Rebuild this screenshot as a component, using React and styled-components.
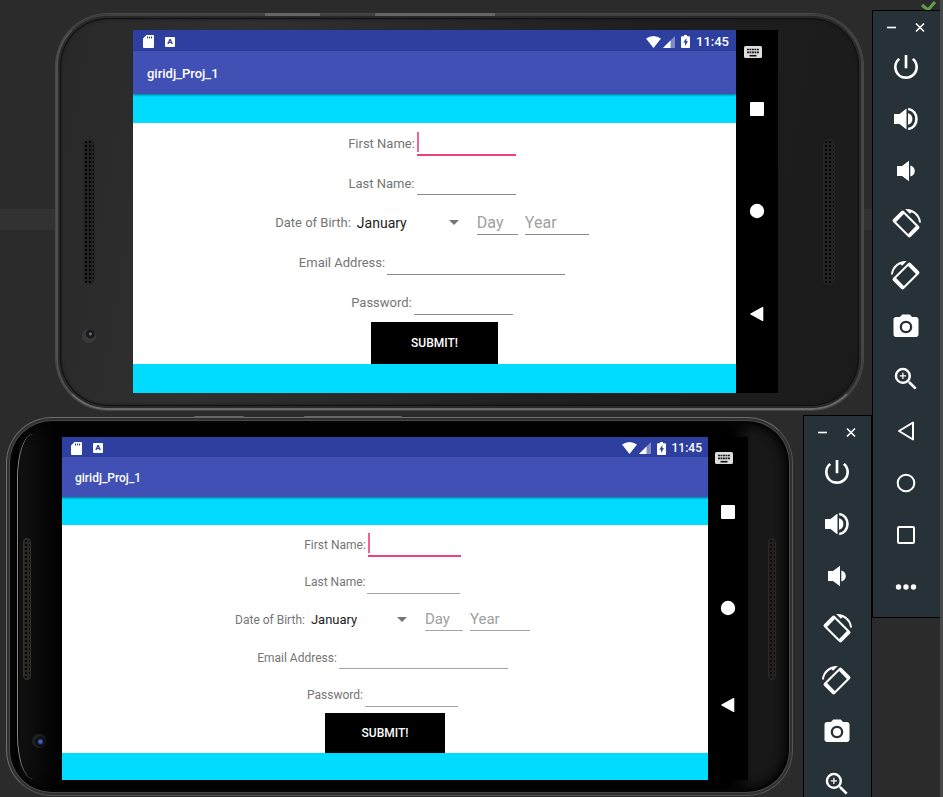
import React, { useId } from "react";
import styled, { createGlobalStyle, css, ThemeProvider } from "styled-components";
import { MdPowerSettingsNew, MdPhotoCamera, MdZoomIn } from "react-icons/md";

const GlobalStyle = createGlobalStyle`
  *, *::before, *::after { box-sizing: border-box; }
  body { margin: 0; background: #2b2b2b; font-family: Roboto, sans-serif; }
  button, input, select { font: inherit; margin: 0; padding: 0; border: 0; border-radius: 0; background: none; color: inherit; }
  button { cursor: pointer; }
`;

const nexus = {
  font: 13, fieldFont: 16, selectFont: 14, statusFont: 13,
  status: 21, appBar: 43, band: 29, lastBand: 29, submit: 42, submitWidth: 127,
  nav: 42, navEdge: 28, inset: 14, statusInset: 10, statusPad: 7,
  name: 99, spinner: 124, day: 41, year: 64, email: 178, form: 241,
  leftBezel: 77, rightBezel: 85, top: 16, bottom: 17,
  leftSpeaker: 27, rightSpeaker: 45, speakerWidth: 12, speakerHeight: 146,
  cameraLeft: 26, cameraTop: 44, line: "#8a8a8a",
};

const pixel = {
  font: 12, fieldFont: 15, selectFont: 13, statusFont: 12,
  status: 20, appBar: 40, band: 28, lastBand: 27, submit: 40, submitWidth: 120,
  nav: 40, navEdge: 27, inset: 13, statusInset: 9, statusPad: 6,
  name: 93, spinner: 118, day: 38, year: 60, email: 169, form: 228,
  leftBezel: 56, rightBezel: 45, top: 20, bottom: 16,
  leftSpeaker: 17, rightSpeaker: 20, speakerWidth: 8, speakerHeight: 142,
  cameraLeft: 26, cameraTop: 54, line: "#a4a4a4",
};

const Desktop = styled.main`
  position: relative;
  height: 100vh;
  overflow: hidden;
  background: linear-gradient(#2b2b2b 209px, #323232 209px 230px, #2b2b2b 230px);
  border-right: 3px solid #47484a;
`;

const CheckMark = styled.svg`
  position: absolute;
  top: 0;
  right: 3px;
  width: 16px;
  height: 12px;
`;

const WindowSlot = styled.div`
  position: absolute;
  top: ${(p) => p.$top}px;
  left: ${(p) => (p.$left === undefined ? "auto" : `${p.$left}px`)};
  right: ${(p) => p.$right}px;
`;

const nexusBody = css`
  border: 2px solid #545454;
  border-color: #3f3f3f #444 #6a6a6a #505050;
  border-radius: 52px;
  background: linear-gradient(100deg, #282828, #303031 22%, #1e1e1e 70%, #1b1b1b);
  box-shadow: 0 0 0 1px #484848, inset 0 0 0 2px #292929, inset 0 0 0 3px #101010, inset 0 0 3px 3px #161616;
`;

const pixelBody = css`
  border: 1px solid #777;
  border-color: #6d6d6d #555 #555 #707070;
  border-radius: 46px;
  background: linear-gradient(90deg, #000 12px, #121212 12px, #020202 48px, #020202 calc(100% - 60px), #171717 calc(100% - 40px), #171717);
  box-shadow: inset 0 0 0 2px #303030, inset 0 0 0 3px #484848, inset 0 0 0 5px #050505, inset 0 0 8px 8px #050505;
`;

const Phone = styled.section`
  position: relative;
  display: grid;
  grid-template-columns: ${({ theme }) => theme.leftBezel - theme.frame}px 1fr ${({ theme }) => theme.rightBezel - theme.frame}px;
  padding: ${({ theme }) => theme.top - theme.frame}px 0 ${({ theme }) => theme.bottom - theme.frame}px;
  ${({ theme }) => (theme.kind === "nexus" ? nexusBody : pixelBody)}
`;

const SideKey = styled.span`
  position: absolute;
  bottom: 100%;
  left: ${(p) => p.$left}px;
  width: ${(p) => p.$width}px;
  height: ${(p) => p.$height}px;
  background: #666;
  border-radius: 1px 1px 0 0;
`;

const GlassEdge = styled.span`
  position: absolute;
  top: 16px;
  bottom: 16px;
  left: 10px;
  width: 16px;
  border-left: 1px solid #8b8b8b;
  border-radius: 16px 0 0 16px / 44px 0 0 44px;
`;

const Bezel = styled.div`
  display: grid;
  grid-template-rows: 1fr auto 1fr;
  padding-left: ${(p) => p.$inset}px;
`;

const Speaker = styled.div`
  grid-row: 2;
  width: ${({ theme }) => theme.speakerWidth}px;
  height: ${({ theme }) => theme.speakerHeight}px;
  border: 1px solid ${({ theme }) => (theme.kind === "nexus" ? "#262626" : "#35332f")};
  border-radius: 6px;
  opacity: ${(p) => (p.$dim ? 0.6 : 1)};
  background: radial-gradient(circle, #050505 1px, transparent 1px) 0 0 / 4px 4px,
    ${({ theme }) => (theme.kind === "nexus" ? "#222" : "#2b2925")};
`;

const Camera = styled.div`
  grid-row: 3;
  width: 14px;
  height: 14px;
  margin-top: ${({ theme }) => theme.cameraTop}px;
  margin-left: ${(p) => p.$shift}px;
  border-radius: 50%;
  background: ${({ theme }) =>
    theme.kind === "nexus"
      ? "radial-gradient(circle at 60% 35%, #76636f 1px, #19191f 2px 4px, #393939 5px)"
      : "radial-gradient(circle at 60% 55%, #4968cc 1px, #101a3c 3px, #090909 4px, #202020 6px)"};
`;

const Screen = styled.div`
  display: grid;
  grid-template-columns: 1fr ${({ theme }) => theme.nav}px;
  background: #000;
`;

const AppView = styled.div`
  display: flex;
  flex-direction: column;
  background: #fff;
`;

const StatusBar = styled.div`
  display: flex;
  align-items: center;
  justify-content: space-between;
  height: ${({ theme }) => theme.status}px;
  padding: 2px ${({ theme }) => theme.statusPad}px 0 ${({ theme }) => theme.statusInset}px;
  background: #2d3f9f;
  color: #fff;
  font-size: ${({ theme }) => theme.statusFont}px;
  font-weight: 500;
  line-height: 16px;
`;

const StatusGroup = styled.div`
  display: flex;
  align-items: center;
  gap: ${(p) => p.$gap}px;
`;

const StatusIcon = styled.svg`
  display: block;
  width: ${(p) => p.$width}px;
  height: ${(p) => p.$height}px;
  fill: currentColor;
`;

const LetterBadge = styled.span`
  width: 10px;
  height: 10px;
  border-radius: 1px;
  background: #fff;
  color: #2d3f9f;
  font-size: 8px;
  font-weight: 900;
  line-height: 10px;
  text-align: center;
`;

const AppBar = styled.header`
  position: relative;
  display: flex;
  align-items: center;
  height: ${({ theme }) => theme.appBar}px;
  padding: 2px ${({ theme }) => theme.inset}px 0;
  background: #4150b5;
  box-shadow: 0 1px 2px rgba(0, 40, 60, 0.6);
`;

const Title = styled.h1`
  margin: 0;
  color: #fff;
  font-size: ${({ theme }) => theme.font}px;
  font-weight: 500;
  line-height: 16px;
`;

const Band = styled.div`
  height: ${({ theme, $last }) => ($last ? theme.lastBand : theme.band)}px;
  background: #00dcff;
`;

const Form = styled.form`
  display: grid;
  grid-template-rows: repeat(5, 1fr) ${({ theme }) => theme.submit}px;
  justify-items: center;
  height: ${({ theme }) => theme.form}px;
  color: #757575;
  font-size: ${({ theme }) => theme.font}px;
`;

const FormRow = styled.div`
  display: flex;
  align-items: center;
`;

const Label = styled.label`
  padding-top: 2px;
  line-height: 20px;
  white-space: nowrap;
`;

const Field = styled.span`
  position: relative;
  display: block;
  width: ${(p) => p.$width}px;
  margin: 0 5px 0 2px;
  padding-top: 1px;
  border-bottom: ${(p) => (p.$active ? "2px solid #f0407f" : `1px solid ${p.theme.line}`)};

  &::before {
    content: "";
    display: ${(p) => (p.$active ? "block" : "none")};
    position: absolute;
    top: 2px;
    bottom: 2px;
    left: 0;
    width: 2px;
    background: #f4608f;
  }
`;

const TextInput = styled.input`
  display: block;
  width: 100%;
  height: 23px;
  padding-top: 1px;
  outline: 0;
  color: #212121;
  font-size: ${({ theme }) => theme.fieldFont}px;

  &::placeholder { color: #a0a0a0; opacity: 1; }
`;

const Spinner = styled.span`
  display: grid;
  grid-template-columns: 1fr 10px;
  align-items: center;
  width: ${({ theme }) => theme.spinner}px;
  padding: 2px 16px 0 6px;
  color: #757575;
`;

const MonthSelect = styled.select`
  grid-area: 1 / 1 / 2 / 3;
  appearance: none;
  outline: 0;
  color: #212121;
  font-size: ${({ theme }) => theme.selectFont}px;
  line-height: 20px;
`;

const SpinnerArrow = styled.svg`
  grid-area: 1 / 2;
  width: 10px;
  height: 6px;
  fill: currentColor;
  pointer-events: none;
`;

const SubmitButton = styled.button`
  width: ${({ theme }) => theme.submitWidth}px;
  background: #000;
  color: #fff;
  font-size: 12px;
  font-weight: 500;
`;

const NavBar = styled.nav`
  display: grid;
  grid-template-rows: ${({ theme }) => theme.navEdge}px repeat(3, 1fr);
  padding-bottom: ${({ theme }) => theme.navEdge}px;
  color: #fff;
`;

const NavButton = styled.button`
  display: grid;
  place-items: center;

  svg { display: block; width: 16px; height: 16px; fill: currentColor; }
`;

const KeyboardButton = styled.button`
  align-self: end;
  height: 12px;
  padding-right: 8px;
  color: #dedede;

  svg { display: block; width: 18px; height: 12px; margin: 0 auto; }
`;

const Toolbar = styled.aside`
  width: 69px;
  height: 608px;
  padding: 8px 2px 0 0;
  border: 1px solid #000;
  background: #273238;
  color: #fff;
`;

const WindowControls = styled.div`
  display: flex;
  justify-content: center;
  gap: 13px;
  height: 22px;
`;

const ControlButton = styled.button`
  width: 16px;
  height: 16px;

  svg { display: block; width: 16px; height: 16px; stroke: currentColor; stroke-width: 1.6; fill: none; }
`;

const ToolButton = styled.button`
  display: grid;
  place-items: center;
  width: 100%;
  height: 52px;

  svg { display: block; }
`;

const ToolSvg = styled.svg`
  width: 32px;
  height: 32px;
  fill: currentColor;
`;

const Glyph = ({ children }) => <ToolSvg viewBox="0 0 32 32" aria-hidden="true">{children}</ToolSvg>;

const VolumeUp = () => (
  <Glyph>
    <path d="M4 11h5.500L16.500 5.500v21L9.500 21H4z" />
    <path d="M18 10.200c2.800.6 4.400 3 4.400 5.800s-1.600 5.200-4.400 5.800z" />
    <path d="M18.200 6c5 .5 8.300 5 8.300 10s-3.300 9.500-8.300 10" fill="none" stroke="currentColor" strokeWidth="2.600" />
  </Glyph>
);

const VolumeDown = () => (
  <Glyph>
    <path d="M7 11h5l7-5.200v20.400L12 21H7z" />
    <path d="M20.300 10.400c2.800.6 4.500 2.900 4.500 5.600s-1.700 5-4.500 5.600z" />
  </Glyph>
);

const RotateDrawing = () => (
  <>
    <path
      transform="translate(16 17) rotate(45)"
      fillRule="evenodd"
      d="M-10.500 -7.700H10.500Q12.500 -7.700 12.500 -5.700V5.700Q12.500 7.700 10.500 7.700H-10.500Q-12.500 7.700 -12.500 5.700V-5.700Q-12.500 -7.700 -10.500 -7.700ZM-8.500 -5.500V5.500H8.500V-5.500Z"
    />
    <path d="M15.200 2.100C23.500 1.400 30.500 7.500 31 15.500h-1.900C28.700 11 25.800 7.200 21.500 5.200L19.900 6.800z" />
  </>
);

const RotateRight = () => <Glyph><RotateDrawing /></Glyph>;
const RotateLeft = () => (
  <Glyph><g transform="matrix(-1 0 0 1 32 0)"><RotateDrawing /></g></Glyph>
);

const BackOutline = () => (
  <Glyph><path d="M9 16L23 7.500v17z" fill="none" stroke="currentColor" strokeWidth="2" strokeLinejoin="round" /></Glyph>
);
const HomeOutline = () => (
  <Glyph><circle cx="16" cy="16" r="8.300" fill="none" stroke="currentColor" strokeWidth="2" /></Glyph>
);
const RecentOutline = () => (
  <Glyph><rect x="8" y="8" width="16" height="16" rx="1" fill="none" stroke="currentColor" strokeWidth="2" /></Glyph>
);
const More = () => (
  <Glyph><circle cx="8.500" cy="16" r="2.700" /><circle cx="16" cy="16" r="2.700" /><circle cx="23.500" cy="16" r="2.700" /></Glyph>
);

const tools = [
  ["Power", <MdPowerSettingsNew size={32} />],
  ["Volume up", <VolumeUp />],
  ["Volume down", <VolumeDown />],
  ["Rotate left", <RotateRight />],
  ["Rotate right", <RotateLeft />],
  ["Take screenshot", <MdPhotoCamera size={30} />],
  ["Zoom", <MdZoomIn size={30} />],
  ["Back", <BackOutline />],
  ["Home", <HomeOutline />],
  ["Overview", <RecentOutline />],
  ["More", <More />],
];

const months = [
  "January", "February", "March", "April", "May", "June", "July",
  "August", "September", "October", "November", "December",
];

function EmulatorToolbar() {
  return (
    <Toolbar aria-label="Emulator controls">
      <WindowControls>
        <ControlButton aria-label="Minimize"><svg viewBox="0 0 16 16"><path d="M4 8.500h9" /></svg></ControlButton>
        <ControlButton aria-label="Close"><svg viewBox="0 0 16 16"><path d="M4 4.500l8 8M12 4.500l-8 8" /></svg></ControlButton>
      </WindowControls>
      {tools.map(([name, icon]) => (
        <ToolButton key={name} aria-label={name} title={name}>{icon}</ToolButton>
      ))}
    </Toolbar>
  );
}

function Status() {
  return (
    <StatusBar>
      <StatusGroup $gap={11}>
        <StatusIcon $width={11} $height={13} viewBox="0 0 11 13">
          <path fillRule="evenodd" d="M3.500 0H10q1 0 1 1v11q0 1-1 1H1q-1 0-1-1V3.500zM4 1.500v2h1v-2zM6 1.500v2h1v-2zM8 1.500v2h1v-2z" />
        </StatusIcon>
        <LetterBadge>A</LetterBadge>
      </StatusGroup>
      <StatusGroup $gap={6}>
        <StatusGroup $gap={2}>
          <StatusIcon $width={15} $height={12} viewBox="0 0 15 12"><path d="M0 2.500Q7.500-2.500 15 2.500L7.500 12z" /></StatusIcon>
          <StatusIcon $width={12} $height={12} viewBox="0 0 12 12">
            <path d="M12 0v12H0z" opacity=".4" /><path d="M7.500 4.500V12H0z" />
          </StatusIcon>
        </StatusGroup>
        <StatusIcon $width={9} $height={13} viewBox="0 0 9 13">
          <path fillRule="evenodd" d="M3 0h3v1.200h2q1 0 1 1V12q0 1-1 1H1q-1 0-1-1V2.200q0-1 1-1h2zM5.500 3L2.300 7.500H4V11l3-4.700H5.300z" />
        </StatusIcon>
        <span>11:45</span>
      </StatusGroup>
    </StatusBar>
  );
}

function ProfileForm({ theme }) {
  const id = useId();
  return (
    <Form onSubmit={(event) => event.preventDefault()}>
      <FormRow>
        <Label htmlFor={`${id}first`}>First Name:</Label>
        <Field $width={theme.name} $active><TextInput id={`${id}first`} /></Field>
      </FormRow>
      <FormRow>
        <Label htmlFor={`${id}last`}>Last Name:</Label>
        <Field $width={theme.name}><TextInput id={`${id}last`} /></Field>
      </FormRow>
      <FormRow>
        <Label htmlFor={`${id}month`}>Date of Birth:</Label>
        <Spinner>
          <MonthSelect id={`${id}month`} defaultValue="January">
            {months.map((month) => <option key={month}>{month}</option>)}
          </MonthSelect>
          <SpinnerArrow viewBox="0 0 10 6"><path d="M0 0h10L5 5z" /></SpinnerArrow>
        </Spinner>
        <Field $width={theme.day}><TextInput aria-label="Day" placeholder="Day" /></Field>
        <Field $width={theme.year}><TextInput aria-label="Year" placeholder="Year" /></Field>
      </FormRow>
      <FormRow>
        <Label htmlFor={`${id}email`}>Email Address:</Label>
        <Field $width={theme.email}><TextInput id={`${id}email`} type="email" /></Field>
      </FormRow>
      <FormRow>
        <Label htmlFor={`${id}password`}>Password:</Label>
        <Field $width={theme.name}><TextInput id={`${id}password`} type="password" /></Field>
      </FormRow>
      <SubmitButton type="submit">SUBMIT!</SubmitButton>
    </Form>
  );
}

function Navigation() {
  return (
    <NavBar aria-label="Device navigation">
      <KeyboardButton aria-label="Keyboard">
        <svg viewBox="0 0 18 12">
          <rect width="18" height="12" rx="1.500" fill="currentColor" />
          <path d="M3 3.500h12M3 6.300h12" stroke="#111" strokeWidth="1.700" strokeDasharray="1.900 .6" />
          <path d="M5.500 9.700h7" stroke="#111" strokeWidth="1.600" />
        </svg>
      </KeyboardButton>
      <NavButton aria-label="Overview"><svg viewBox="0 0 16 16"><rect x="1" y="1" width="14" height="14" rx="1" /></svg></NavButton>
      <NavButton aria-label="Home"><svg viewBox="0 0 16 16"><circle cx="8" cy="8" r="7.200" /></svg></NavButton>
      <NavButton aria-label="Back"><svg viewBox="0 0 16 16"><path d="M1.500 7.400L13.300 1q1-.4 1 .6v12.800q0 1-1 .6L1.500 8.600q-.8-.6 0-1.200z" /></svg></NavButton>
    </NavBar>
  );
}

function Emulator({ theme, children }) {
  return (
    <ThemeProvider theme={theme}>
      <Phone>
        {children}
        <Bezel $inset={theme.leftSpeaker - theme.frame}>
          <Speaker />
          <Camera $shift={theme.cameraLeft - theme.leftSpeaker} />
        </Bezel>
        <Screen>
          <AppView>
            <Status />
            <AppBar><Title>giridj_Proj_1</Title></AppBar>
            <Band />
            <ProfileForm theme={theme} />
            <Band $last />
          </AppView>
          <Navigation />
        </Screen>
        <Bezel $inset={theme.rightSpeaker}><Speaker $dim={theme.kind === "pixel"} /></Bezel>
      </Phone>
    </ThemeProvider>
  );
}

const nexusTheme = { ...nexus, kind: "nexus", frame: 2 };
const pixelTheme = { ...pixel, kind: "pixel", frame: 1 };

export default function App() {
  return (
    <>
      <GlobalStyle />
      <Desktop>
        <CheckMark viewBox="0 0 16 12"><path d="M1 5l6 5 7-8" fill="none" stroke="#5fa04c" strokeWidth="3" /></CheckMark>
        <WindowSlot $top={14} $left={56} $right={77}>
          <Emulator theme={nexusTheme}>
            <SideKey $left={207} $width={55} $height={3} />
            <SideKey $left={317} $width={120} $height={3} />
          </Emulator>
        </WindowSlot>
        <WindowSlot $top={417} $left={6} $right={147}>
          <Emulator theme={pixelTheme}>
            <SideKey $left={187} $width={50} $height={2} />
            <SideKey $left={297} $width={98} $height={2} />
            <GlassEdge />
          </Emulator>
        </WindowSlot>
        <WindowSlot $top={415} $right={68}><EmulatorToolbar /></WindowSlot>
        <WindowSlot $top={10} $right={-1}><EmulatorToolbar /></WindowSlot>
      </Desktop>
    </>
  );
}
